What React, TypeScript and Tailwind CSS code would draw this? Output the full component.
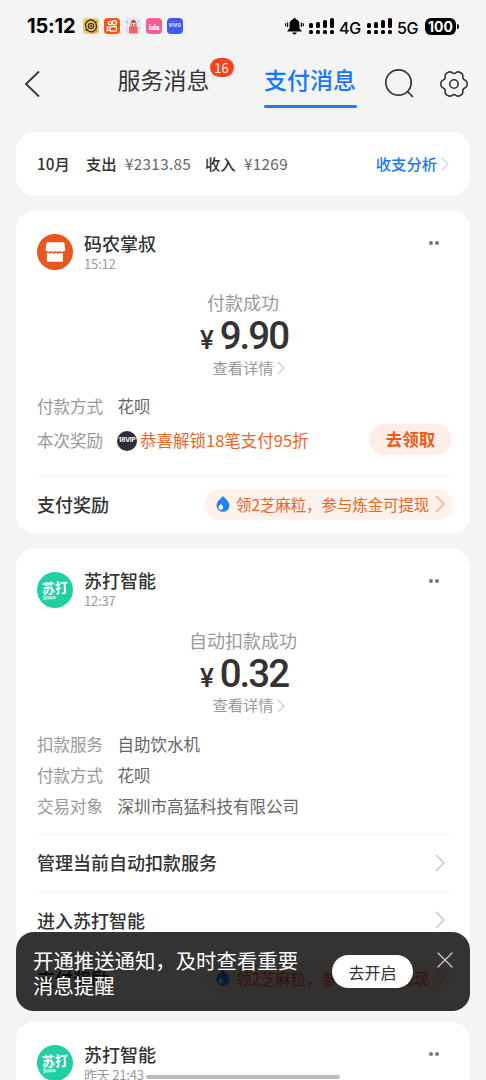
import React from 'react';
import { X } from 'lucide-react';

interface Detail {
  label: string;
  value: React.ReactNode;
}

function Chevron({ className = 'text-[#c4c4c4]', size = 16 }: { className?: string; size?: number }) {
  return (
    <svg className={className} width={size / 2 + 2} height={size + 2} viewBox="0 0 10 18" fill="none">
      <path d="M1 1l8 8-8 8" stroke="currentColor" strokeWidth="1.4" />
    </svg>
  );
}

// Six soft lobes around the centre of a 30x30 box
const gearPoints = Array.from({ length: 72 }, (_, i) => {
  const a = (i / 72) * Math.PI * 2;
  const r = 12.1 + 1.3 * Math.cos(6 * a) - 0.25 * Math.cos(12 * a);
  return `${(15 + r * Math.cos(a)).toFixed(2)},${(15 + r * Math.sin(a)).toFixed(2)}`;
}).join(' ');

function Signal() {
  return (
    <svg width="25" height="17" viewBox="0 0 25 17" fill="currentColor">
      <rect x="0" y="5" width="4" height="5" rx="1.6" />
      <rect x="7" y="4" width="4" height="6" rx="1.6" />
      <rect x="14" y="2" width="4" height="8" rx="1.6" />
      <rect x="21" y="0" width="4" height="10" rx="1.6" />
      {[0, 7, 14, 21].map(x => (
        <rect key={x} x={x} y="12" width="4" height="4" rx="1.6" />
      ))}
    </svg>
  );
}

function StatusBar() {
  return (
    <div className="flex h-[52px] items-center justify-between pr-[27px] pl-[27px] text-black">
      <div className="flex items-center">
        <span className="w-[56px] font-['Inter'] text-[20px] font-bold tracking-[-0.2px]">15:12</span>
        <div className="flex gap-[5px]">
          <svg width="16" height="16" viewBox="0 0 16 16">
            <rect width="16" height="16" rx="3.5" fill="#eac873" />
            <g fill="none" stroke="#4a3517" strokeWidth="1.4">
              <path d="M3.2 10.3A5.2 5.2 0 0 1 12.5 4.7l1-1.2M12.8 5.7A5.2 5.2 0 0 1 3.6 11.2l-1 1.3" />
              <circle cx="8" cy="8" r="2.6" />
            </g>
            <circle cx="8" cy="8" r="1" fill="#4a3517" />
            <path d="M10 14.5l1.5-1 1 1 2-2" stroke="#e06848" fill="none" />
          </svg>
          <svg width="16" height="16" viewBox="0 0 16 16" fill="none" stroke="#fff" strokeWidth="1.3">
            <rect width="16" height="16" rx="3.5" fill="#fd5410" stroke="none" />
            <circle cx="6" cy="5" r="1.7" />
            <circle cx="10.4" cy="4.8" r="2.1" />
            <rect x="6" y="8.6" width="6.5" height="4.6" rx="1.3" />
            <path d="M6 10.2L3.3 8.8v4L6 11.5" />
          </svg>
          <svg width="16" height="16" viewBox="0 0 16 16">
            <rect width="16" height="16" rx="3.5" fill="#e9e7f0" />
            <path d="M4 15.5V9.5l1.3-1V6.5a3.2 3.2 0 0 1 6.4 0v2l1 1v6z" fill="#f06468" />
            <path d="M5.500 4l3-2.500 3 2.500z" fill="#a84852" />
            <rect x="5.8" y="5" width="5.4" height="2.6" rx="1.3" fill="#fff" />
            <circle cx="7.3" cy="6.300" r=".8" fill="#333" />
            <circle cx="9.9" cy="6.300" r=".8" fill="#333" />
            <circle cx="2.2" cy="4" r=".7" fill="#5a8fd8" />
            <circle cx="14" cy="3.5" r=".7" fill="#5cbfae" />
            <circle cx="2" cy="12" r=".6" fill="#9a7bd0" />
            <circle cx="14.3" cy="10" r=".6" fill="#5a8fd8" />
          </svg>
          <div className="flex h-4 w-4 items-center justify-center rounded-[4px] bg-[#fb5a93] pt-[2px] font-['Inter'] text-[7px] leading-none font-bold tracking-[-0.3px] text-white">
            lala
          </div>
          <div className="flex h-4 w-4 items-center justify-center rounded-[4px] bg-[#3e5bf2] font-['Inter'] text-[5.500px] leading-none font-semibold tracking-[0.3px] text-white">
            vivo
          </div>
        </div>
      </div>
      <div className="flex items-center">
        <svg className="mr-[5px]" width="19" height="17" viewBox="0 0 19 17" fill="currentColor">
          <path d="M9.5 0c.9 0 1.4.6 1.4 1.3 2.2.6 3.5 2.4 3.5 4.7v4.3l2.3 2.6v.7H2.300v-.7l2.300-2.600V6c0-2.300 1.300-4.100 3.500-4.700C8.100.6 8.600 0 9.500 0z" />
          <path d="M7.300 14.600h4.400c-.2 1.200-1.100 1.900-2.200 1.900s-2-.7-2.200-1.900z" />
          <path d="M2.600 4.500v4.500M.7 5.300v2.900M16.400 4.500v4.500M18.300 5.300v2.900" stroke="currentColor" strokeWidth="1.2" />
        </svg>
        <Signal />
        <span className="ml-[5px] w-[28px] pt-[3px] font-['Inter'] text-[16px] leading-none font-medium tracking-[-0.3px]">4G</span>
        <Signal />
        <span className="ml-[5px] w-[28px] pt-[3px] font-['Inter'] text-[16px] leading-none font-medium tracking-[-0.3px]">5G</span>
        <span className="flex h-[17px] w-[31px] items-center justify-center rounded-[6px] bg-black font-['Inter'] text-[14px] font-bold text-white">
          100
        </span>
        <span className="ml-px h-[5px] w-[2px] rounded-r bg-black" />
      </div>
    </div>
  );
}

function NavBar() {
  return (
    <header className="flex h-[80px] pl-[24px] text-[#333]">
      <svg className="mt-[18px]" width="16" height="28" viewBox="0 0 16 28" fill="none">
        <path d="M15 1.500L2 14L15 26.500" stroke="currentColor" strokeWidth="1.8" />
      </svg>
      <div className="ml-[77.500px] flex h-[56px] w-[93px] pt-[10px] text-[23px] leading-[34px] whitespace-nowrap">
        服务消息
        <span className="-mt-[4px] flex h-[19px] w-[24px] shrink-0 items-center justify-center rounded-full bg-[#ff411c] text-[13px] leading-none text-white">
          16
        </span>
      </div>
      <div className="ml-[53.500px] flex h-[56px] w-[93px] flex-col justify-between pt-[10px] text-[23px] leading-[34px] font-medium whitespace-nowrap text-[#1677ff]">
        支付消息
        <span className="h-[3px] w-[93px] rounded-full bg-[#1f7bf2]" />
      </div>
      <svg className="mt-[16px] ml-[27px]" width="32" height="32" viewBox="0 0 32 32" fill="none" stroke="currentColor" strokeWidth="1.7">
        <circle cx="14.500" cy="14.500" r="12.700" />
        <path d="M23.500 23.500l5.500 5.500" />
      </svg>
      <svg className="mt-[17px] ml-[23px]" width="30" height="30" viewBox="0 0 30 30" fill="none" stroke="currentColor" strokeWidth="1.6">
        <polygon points={gearPoints} strokeLinejoin="round" />
        <circle cx="15" cy="15" r="4.200" />
      </svg>
    </header>
  );
}

function ShopAvatar() {
  return (
    <svg width="36" height="36" viewBox="0 0 36 36">
      <circle cx="18" cy="18" r="18" fill="#e9571f" />
      <path
        d="M10.800 8.200h15.200c.9 0 1.300.4 1.400 1.100l.9 6.200c.1 1.200-.5 1.800-1.600 1.800-1 0-1.300.7-2.200.7s-1.300-.7-2.100-.7-1.200.7-2.100.7-1.200-.7-2-.7-1.100.7-2 .7-1.200-.7-2.100-.7-1.200.7-2.100.7-1.300-.7-2-.7c-1-.1-1.600-.7-1.500-1.800l.8-6.200c.1-.7.600-1.100 1.400-1.100z"
        fill="#fff"
      />
      <path
        d="M9.900 19.100c.7-.5 1.300-.3 1.900.2.7.5 1.500.3 2.100-.1.7-.5 1.300-.4 2 .1s1.400.4 2.100-.1c.7-.4 1.300-.4 2 .1s1.400.4 2.100-.1c.7-.4 1.300-.4 1.900.1.700.4 1.300.2 2-.2v7.400c0 .9-.5 1.300-1.300 1.300H11.200c-.8 0-1.300-.4-1.300-1.300z"
        fill="#fff"
      />
    </svg>
  );
}

function SodaAvatar() {
  return (
    <div className="flex h-9 w-9 -rotate-3 flex-col items-center rounded-full bg-[#1fd0a3] pt-[9px] text-white">
      <span className="scale-y-110 text-[13px] leading-[14px] font-bold">苏打</span>
      <span className="mr-[12px] font-['Inter'] text-[4.500px] leading-[5px] font-bold">SODA</span>
    </div>
  );
}

function CardHeader({ avatar, name, time }: { avatar: React.ReactNode; name: string; time: string }) {
  return (
    <div className="flex h-[79px] pt-[23px]">
      {avatar}
      <div className="-mt-[3.500px] ml-[11px] flex-1">
        <div className="text-[18px] leading-[24px] font-medium text-[#333]">{name}</div>
        <div className="text-[13px] leading-[18px] tracking-[-0.2px] text-[#999]">{time}</div>
      </div>
      <div className="mt-[7px] mr-[13px] flex gap-[2px]">
        <i className="h-1 w-1 rounded-full bg-[#777]" />
        <i className="h-1 w-1 rounded-full bg-[#777]" />
      </div>
    </div>
  );
}

function Payment({ status, amount }: { status: string; amount: string }) {
  return (
    <div className="flex flex-col items-center pr-[3px]">
      <div className="h-[26px] text-[18px] leading-[24px] text-[#999]">{status}</div>
      <div className="flex h-[38px] items-baseline pt-px pl-[2px] font-['Roboto'] leading-[38px] font-medium text-[#333]">
        <span className="mr-[6px] text-[26px]">¥</span>
        <span className="text-[38.500px] tracking-[-2px]">{amount}</span>
      </div>
      <div className="flex h-[28px] items-center gap-[3px] pl-[11px] text-[15.300px] text-[#999]">
        <span className="-mt-[2px]">查看详情</span>
        <Chevron size={12} />
      </div>
    </div>
  );
}

function DetailRow({ label, value }: Detail) {
  return (
    <div className="flex h-[31px] items-center text-[16.500px]">
      <span className="w-[80.500px] text-[#999]">{label}</span>
      <span className="text-[#666]">{value}</span>
    </div>
  );
}

function FooterRow({ title, children }: { title: string; children?: React.ReactNode }) {
  return (
    <div className="flex h-[57.600px] items-center justify-between border-t border-[#f6f6f6]">
      <span className="text-[18px] font-medium text-[#333]">{title}</span>
      {children ?? <span className="mr-[7px]"><Chevron /></span>}
    </div>
  );
}

function RewardPill() {
  return (
    <div className="-mr-px flex h-[31px] w-[249px] items-center rounded-full bg-[#fff2ec] pl-[12px] text-[15.400px] text-[#ee6425]">
      <svg width="14" height="16" viewBox="0 0 14 16">
        <path d="M7 0c2 2.200 6.500 5.500 6.500 9.500A6.500 6.300 0 0 1 .5 9.500C.5 5.500 5 2.200 7 0z" fill="#2680f5" />
        <path d="M4.800 8c.9 1.100 2.300 2 2.300 3.600a2.300 2.200 0 0 1-4.600 0c0-1.600 1.400-2.500 2.300-3.600z" fill="#fff" />
      </svg>
      <span className="ml-[6px] w-[199px] whitespace-nowrap">领2芝麻粒，参与炼金可提现</span>
      <Chevron className="text-[#f0a88a]" />
    </div>
  );
}

const cardClass = 'rounded-[18px] bg-white pl-[21px] pr-[18px]';

const sodaDetails: Detail[] = [
  { label: '扣款服务', value: '自助饮水机' },
  { label: '付款方式', value: '花呗' },
  { label: '交易对象', value: '深圳市高猛科技有限公司' },
];

export default function App() {
  return (
    <div className="relative h-[1080px] w-[486px] overflow-hidden bg-[#f4f4f4] font-['Noto_Sans_CJK_SC',sans-serif]">
      <StatusBar />
      <NavBar />

      <main className="flex flex-col gap-4 px-4">
        {/* Monthly summary */}
        <section className="flex h-[63px] items-center rounded-[18px] bg-white px-[21px] text-[15.300px] text-[#666]">
          <b className="w-[49px] font-medium text-[#333]">10月</b>
          <b className="w-[39px] font-medium text-[#333]">支出</b>
          <span className="w-[80px] tracking-[0.3px]">¥2313.85</span>
          <b className="w-[39px] font-medium text-[#333]">收入</b>
          <span className="tracking-[0.3px]">¥1269</span>
          <span className="mr-[4px] ml-auto font-medium text-[#1677ff]">收支分析</span>
          <Chevron className="text-[#c3d8ea]" size={12} />
        </section>

        <section className={cardClass}>
          <CardHeader avatar={<ShopAvatar />} name="码农掌叔" time="15:12" />
          <Payment status="付款成功" amount="9.90" />
          <div className="pt-[9px] pb-[16px]">
            <DetailRow label="付款方式" value="花呗" />
            <div className="flex h-[37px] items-center text-[16.500px]">
              <span className="w-[80px] text-[#999]">本次奖励</span>
              <span className="flex h-[20px] w-[20px] items-center justify-center rounded-full bg-[#2d2c3a] font-['Inter'] text-[6.500px] font-bold tracking-[-0.2px] text-white">
                18VIP
              </span>
              <span className="ml-[3px] text-[#ee6425]">恭喜解锁18笔支付95折</span>
              <button className="-mt-[2px] ml-auto flex h-[31px] w-[83px] items-center justify-center rounded-full bg-[#ffeee8] pb-px font-bold text-[#ec5a14]">
                去领取
              </button>
            </div>
          </div>
          <FooterRow title="支付奖励">
            <RewardPill />
          </FooterRow>
        </section>

        <section className={cardClass}>
          <CardHeader avatar={<SodaAvatar />} name="苏打智能" time="12:37" />
          <Payment status="自动扣款成功" amount="0.32" />
          <div className="pt-[9px] pb-[12px]">
            {sodaDetails.map(d => (
              <DetailRow key={d.label} {...d} />
            ))}
          </div>
          <FooterRow title="管理当前自动扣款服务" />
          <FooterRow title="进入苏打智能" />
          <FooterRow title="支付奖励">
            <RewardPill />
          </FooterRow>
        </section>

        <section className={cardClass}>
          <CardHeader avatar={<SodaAvatar />} name="苏打智能" time="昨天 21:43" />
        </section>
      </main>

      {/* Push notification prompt */}
      <div className="absolute top-[932px] left-4 flex h-[79px] w-[454px] rounded-[18px] bg-black/80 pl-[17px] text-white">
        <p className="mt-[16px] w-[299px] text-[20.400px] leading-[24.500px]">
          开通推送通知，及时查看重要
          <br />
          消息提醒
        </p>
        <button className="mt-[23px] flex h-[33px] w-[81px] items-center justify-center rounded-full bg-white text-[16px] text-[#333]">
          去开启
        </button>
        <X className="mt-[14px] ml-[18px] text-[#ccc]" size={28} strokeWidth={1.1} />
      </div>

      {/* Home indicator */}
      <div className="absolute top-[1075px] left-[146px] h-[4px] w-[194px] rounded-full bg-[#bcbcbc]" />
    </div>
  );
}
